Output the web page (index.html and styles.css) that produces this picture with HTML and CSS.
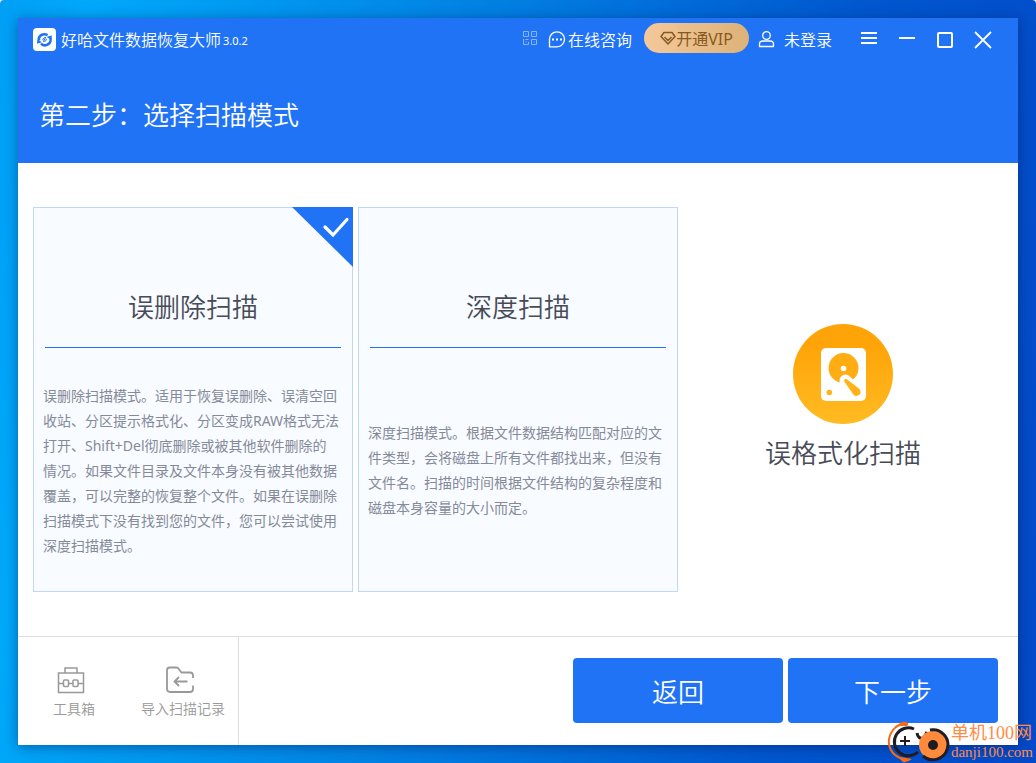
FILE: index.html
```html
<!DOCTYPE html>
<html lang="zh-CN">
<head>
<meta charset="utf-8">
<title>好哈文件数据恢复大师</title>
<link rel="stylesheet" href="styles.css">
</head>
<body>
<div class="window">
  <header class="header">
    <div class="titlebar">
      <svg class="logo" viewBox="0 0 23 23" width="23" height="23" aria-hidden="true">
        <rect width="23" height="23" rx="4" fill="#fff"/>
        <path d="M6 12.600A5.600 5 0 0 1 14.600 7.200M17 9.600A5.600 5.200 0 0 1 8 15.600" fill="none" stroke="#2173f5" stroke-width="2.600"/>
        <path d="M13.600 8.800L19 7.400 18.200 12ZM3.900 15.700L4.500 11.400 9 14.200Z" fill="#2173f5"/>
        <path d="M9.600 12.200Q9.800 9.400 13 9.400M13.600 10.800Q13.400 13.600 10.200 13.600M12.400 10L10.600 13" fill="none" stroke="#2173f5" stroke-width="1"/>
      </svg>
      <span class="app-name">好哈文件数据恢复大师</span>
      <span class="version">3.0.2</span>
      <div class="tools">
        <button class="tool qr" aria-label="二维码">
          <svg viewBox="0 0 14 14" width="14" height="14" fill="none" stroke="#8bb6fb"><path d="M.5.5h5v5h-5zM8.500.5h5v5h-5zM8.500 8.500h5v5h-5zM.5 8v5.500h5V11M2.500 8.500h3M2.500 3h1M10.500 3h1M10.500 11h1M2.500 11h1"/></svg>
        </button>
        <button class="tool chat">
          <svg viewBox="0 0 18 17" width="18" height="17"><path d="M1.500 15.800V8.300A7.500 7.500 0 1 1 9 15.800Z" fill="none" stroke="#fff" stroke-width="1.300" stroke-linejoin="round"/><path d="M4 7.500h2v2h-2zM8 7.500h2v2H8zM12 7.500h2v2h-2z" fill="#fff"/></svg>
          <span>在线咨询</span>
        </button>
        <button class="vip">
          <svg viewBox="0 0 16 14" width="16" height="14" fill="none" stroke="#86591f" stroke-width="1.500" stroke-linejoin="round"><path d="M4 1.500h8l3 4-7 7.500-7-7.500ZM4.500 6L8 9.500 11.500 6"/></svg>
          <span>开通VIP</span>
        </button>
        <button class="tool user">
          <svg viewBox="0 0 17 18" width="17" height="18" fill="none" stroke="#fff" stroke-width="1.300"><circle cx="8.500" cy="5.500" r="3.800"/><path d="M1.500 16.500v-2.500Q1.500 11 5 11H12Q15.500 11 15.500 14V16.500Z" stroke-linejoin="round"/></svg>
          <span>未登录</span>
        </button>
      </div>
      <div class="controls">
        <button class="tool" aria-label="菜单"><svg viewBox="0 0 18 18" width="18" height="18"><path d="M1 1h16v2H1zM1 6h16v2H1zM1 11h16v2H1z" fill="#fff"/></svg></button>
        <button class="tool" aria-label="最小化"><svg viewBox="0 0 18 18" width="18" height="18"><path d="M1 6h16v2H1z" fill="#fff"/></svg></button>
        <button class="tool" aria-label="最大化"><svg viewBox="0 0 18 18" width="18" height="18"><rect x="2" y="2" width="14" height="14" rx="1" fill="none" stroke="#fff" stroke-width="2"/></svg></button>
        <button class="tool" aria-label="关闭"><svg viewBox="0 0 18 18" width="18" height="18"><path d="M1 1l16 16M17 1L1 17" stroke="#fff" stroke-width="1.800"/></svg></button>
      </div>
    </div>
    <h1 class="step">第二步：选择扫描模式</h1>
  </header>

  <main class="modes">
    <button class="card">
      <span class="card-title">误删除扫描</span>
      <span class="card-text"><span>误删除扫描模式。适用于恢复误删除、误清空回收站、分区提示格式化、分区变成RAW格式无法打开、Shift+Del彻底删除或被其他软件删除的<br>情况。如果文件目录及文件本身没有被其他数据覆盖，可以完整的恢复整个文件。如果在误删除扫描模式下没有找到您的文件，您可以尝试使用深度扫描模式。</span></span>
      <svg class="corner" viewBox="0 0 61 60" width="61" height="60" aria-hidden="true"><path d="M0 0H61V60Z" fill="#2173f5"/><path d="M33 20l8 8L55 12.500" fill="none" stroke="#fff" stroke-width="3.200" stroke-linecap="round"/></svg>
    </button>
    <button class="card">
      <span class="card-title">深度扫描</span>
      <span class="card-text"><span>深度扫描模式。根据文件数据结构匹配对应的文件类型，会将磁盘上所有文件都找出来，但没有文件名。扫描的时间根据文件结构的复杂程度和磁盘本身容量的大小而定。</span></span>
    </button>
    <button class="format">
      <svg viewBox="0 0 100 100" width="100" height="100" aria-hidden="true">
        <defs><linearGradient id="amber" x1="0" y1="0" x2="0" y2="1"><stop offset=".2" stop-color="#ffa408"/><stop offset="1" stop-color="#ffbb22"/></linearGradient></defs>
        <circle cx="50" cy="50" r="50" fill="url(#amber)"/>
        <rect x="28" y="24" width="45" height="53" rx="5" fill="#fff"/>
        <circle cx="50.500" cy="44" r="15" fill="#ffad12"/>
        <circle cx="50.500" cy="44.500" r="2.800" fill="#fff"/>
        <path d="M52.500 56.500L64 67.500" stroke="#fff" stroke-width="12" stroke-linecap="round"/>
        <path d="M51.200 57.500Q50.500 54.500 53.500 55L66.500 65Q69 69 66 71Q62 73.500 60 70Z" fill="#ffb319"/>
        <circle cx="36.300" cy="68.500" r="2.800" fill="#ffb319"/>
      </svg>
      <span>误格式化扫描</span>
    </button>
  </main>

  <footer class="footer">
    <div class="shortcuts">
      <button class="shortcut">
        <svg viewBox="0 0 28 28" width="28" height="28" fill="none" stroke="#999" stroke-width="1.500"><path d="M1.500 7h25v19.500h-25zM8 7V2h12v5M1.500 17.500h5M12 17.500h4M21 17.500h5.500"/><rect x="6.500" y="14" width="5" height="6.500" rx="1"/><rect x="16" y="14" width="5" height="6.500" rx="1"/></svg>
        <span>工具箱</span>
      </button>
      <button class="shortcut">
        <svg viewBox="0 0 28 28" width="28" height="28" fill="none" stroke="#999" stroke-width="1.800"><path d="M27 12V9.500Q27 6.500 24 6.500H15.500L12 2Q11.500 1.500 10 1.500H3.500Q1 1.500 1 4V22.500Q1 26 4 26H24Q27 26 27 23V19.500M21.500 15.500H9M13 11L8.500 15.500l4.500 4.500"/></svg>
        <span>导入扫描记录</span>
      </button>
    </div>
    <div class="actions">
      <button class="primary">返回</button>
      <button class="primary">下一步</button>
    </div>
  </footer>
</div>

<div class="watermark">
  <svg viewBox="0 0 64 42" width="64" height="42" fill="none" aria-hidden="true">
    <path d="M21 3Q11 2 6 9T2 23Q4 36 20 39" stroke="#f76b14" stroke-width="2"/>
    <path d="M10 5Q14 0 19 1Q23 2 20 5ZM11 36Q16 36 25 38Q20 42 16 41Z" fill="#f76b14"/>
    <path d="M27 8A14 14 0 1 0 31 31M30 12Q31 18 36 17M37 17L40 11" stroke="#201c22" stroke-width="3"/>
    <path d="M18 15v10M13 20h10" stroke="#201c22" stroke-width="2"/>
    <circle cx="46" cy="24" r="14" fill="#ff8a3c"/>
    <path d="M43 9A15 15 0 1 1 36 35" stroke="#201c22" stroke-width="3"/>
    <circle cx="46" cy="24" r="5" fill="#201c22"/>
  </svg>
  <div class="watermark-text"><strong>单机100网</strong><span>danji100.com</span></div>
</div>
</body>
</html>
```
FILE: styles.css
```css
* { box-sizing: border-box; }

html { background: #fff; }

body {
  margin: 0;
  min-height: 100vh;
  padding: 18px;
  display: flex;
  border-radius: 4px 4px 0 0;
  background: linear-gradient(98deg, #009ff5 0%, #00a8fa 8%, #0284e4 40%, #0058cf 75%, #0449c8 100%);
  font-family: "Noto Sans", "Noto Sans CJK SC", sans-serif;
  font-weight: 350;
}

button {
  margin: 0;
  padding: 0;
  border: 0;
  background: none;
  color: inherit;
  font: inherit;
  cursor: pointer;
}

.window {
  flex: 1;
  display: flex;
  flex-direction: column;
  background: #fff;
  box-shadow: 0 2px 12px rgba(0, 20, 80, 0.45);
}

.header {
  background: #2173f5;
  color: #fff;
  padding-bottom: 27px;
}

.titlebar {
  display: flex;
  align-items: center;
  height: 44px;
  padding: 0 26px 0 15px;
}

.logo { margin-bottom: 2px; }
.app-name { margin-left: 5px; font-size: 16px; line-height: 22px; }
.version { margin-left: 2px; font-size: 11px; font-weight: 400; }

.tools {
  display: flex;
  align-items: center;
  margin-left: auto;
  padding-bottom: 2px;
  font-size: 16px;
}

.tool { display: flex; align-items: center; }
.qr { margin: 0 11px 2px 0; }
.chat { gap: 2px; margin-right: 12px; }
.chat svg { flex: none; }

.vip {
  display: flex;
  align-items: center;
  justify-content: center;
  width: 105px;
  height: 30px;
  margin-bottom: 2px;
  border-radius: 15px;
  background: linear-gradient(90deg, #f5c89b, #dcb277);
  color: #86591f;
  font-weight: 400;
}

.user { gap: 9px; margin-left: 9px; }

.controls { display: flex; gap: 20px; margin-left: 28px; }

.step {
  margin: 33px 0 0;
  padding-left: 21px;
  font-size: 26px;
  font-weight: 350;
  line-height: 41px;
}

.modes {
  flex: 1;
  display: grid;
  grid-template-columns: repeat(3, 1fr);
  column-gap: 5px;
  padding: 44px 15px;
}

.card {
  position: relative;
  display: flex;
  flex-direction: column;
  padding: 0 9px;
  border: 1px solid #c1d7f8;
  background: #f8fbff;
}

.card-title {
  margin: 0 2px;
  padding-top: 79px;
  height: 140px;
  border-bottom: 1px solid #2173f5;
  color: #474b57;
  font-size: 26px;
  line-height: 41px;
}

.card-text {
  flex: 1;
  display: flex;
  align-items: center;
  padding-top: 1px;
  color: #858a99;
  font-size: 14px;
  font-weight: 400;
  line-height: 25px;
  text-align: left;
}

.corner { position: absolute; top: -1px; right: -1px; }

.format {
  display: flex;
  flex-direction: column;
  align-items: center;
  justify-content: center;
  gap: 9px;
  padding-bottom: 2px;
  color: #474b57;
  font-size: 26px;
  line-height: 41px;
}

.footer {
  display: flex;
  height: 109px;
  border-top: 1px solid #dedede;
}

.shortcuts {
  display: flex;
  align-items: center;
  gap: 46px;
  width: 221px;
  padding: 2px 13px 0 35px;
  border-right: 1px solid #dedede;
  color: #999;
}

.shortcut {
  display: flex;
  flex-direction: column;
  align-items: center;
  gap: 5px;
  font-size: 14px;
  line-height: 20px;
  white-space: nowrap;
}

.shortcut svg { margin-right: 6px; }

.actions {
  flex: 1;
  display: flex;
  align-items: center;
  justify-content: flex-end;
  gap: 5px;
  padding: 0 20px 2px 0;
}

.primary {
  width: 210px;
  height: 65px;
  padding-top: 2px;
  border-radius: 4px;
  background: #2173f5;
  color: #fff;
  font-size: 26px;
}

.watermark {
  position: absolute;
  right: 3px;
  bottom: 0;
  display: flex;
  align-items: center;
  color: #ff8b45;
}

.watermark-text { display: flex; flex-direction: column; font-family: "Liberation Serif", "Noto Sans CJK SC", serif; font-weight: 400; }
.watermark-text strong { font-size: 18px; font-weight: 400; line-height: 20px; }
.watermark-text span { font-size: 15px; line-height: 18px; }
```
